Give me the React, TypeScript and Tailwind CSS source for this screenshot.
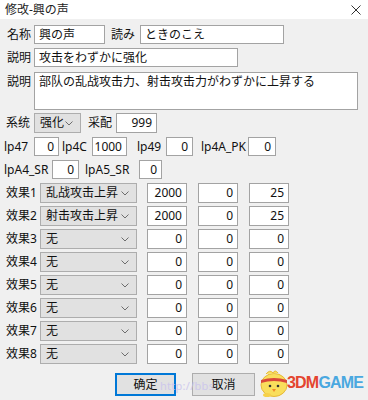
import React from "react";

const Chevron = () => (
  <svg width="8" height="5" viewBox="0 0 8 5" className="shrink-0">
    <path d="M0.5 0.5 L4 4 L7.5 0.5" fill="none" stroke="#6d6d6d" strokeWidth="1" />
  </svg>
);

function Sel({ text, w }: { text: string; w: string }) {
  return (
    <div className={`${w} h-full flex items-center justify-between bg-[#e1e1e1] border border-[#adadad] pl-[5px] pr-[7px]`}>
      <span>{text}</span>
      <Chevron />
    </div>
  );
}

function Box({ v, w, left }: { v: string; w: string; left?: boolean }) {
  return (
    <div className={`${w} h-full flex items-center ${left ? "justify-start pl-[4px]" : "justify-end pr-[4px]"} bg-white border border-[#a3a3a3]`}>
      <span>{v}</span>
    </div>
  );
}

const effects: [string, string, string, string][] = [
  ["乱战攻击上昇", "2000", "0", "25"],
  ["射击攻击上昇", "2000", "0", "25"],
  ["无", "0", "0", "0"],
  ["无", "0", "0", "0"],
  ["无", "0", "0", "0"],
  ["无", "0", "0", "0"],
  ["无", "0", "0", "0"],
  ["无", "0", "0", "0"],
];

export default function App() {
  return (
    <div
      className="relative w-[368px] h-[400px] overflow-hidden bg-[#f0f0f0] text-[12px] text-[#111] leading-none"
      style={{ fontFamily: '"Noto Sans", "Noto Sans CJK JP", sans-serif' }}
    >
      {/* title bar */}
      <div className="h-[19px] bg-white flex items-center justify-between pl-[5px] pr-[7px]">
        <span className="text-[12px] text-[#222]">修改-興の声</span>
        <svg width="10" height="10" viewBox="0 0 10 10">
          <path d="M0.5 0.5 L9.5 9.5 M9.5 0.5 L0.5 9.5" stroke="#333" strokeWidth="1" />
        </svg>
      </div>

      <div className="flex flex-col">
        {/* 名称 row */}
        <div className="mt-[6px] h-[19px] flex items-center pl-[7px]">
          <span className="w-[27px]">名称</span>
          <Box v="興の声" w="w-[71px]" left />
          <span className="ml-[6px] w-[29px]">読み</span>
          <Box v="ときのこえ" w="w-[144px]" left />
        </div>
        {/* 説明 row */}
        <div className="mt-[4px] h-[19px] flex items-center pl-[7px]">
          <span className="w-[27px]">説明</span>
          <Box v="攻击をわずかに强化" w="w-[204px]" left />
        </div>
        {/* textarea */}
        <div className="mt-[5px] h-[38px] flex items-start pl-[7px]">
          <span className="w-[27px] pt-[4px]">説明</span>
          <div className="w-[324px] h-full bg-white border border-[#a3a3a3] pl-[4px] pt-[3px]">
            部队の乱战攻击力、射击攻击力がわずかに上昇する
          </div>
        </div>
        {/* 系统 row */}
        <div className="mt-[3px] h-[20px] flex items-center pl-[6px]">
          <span className="w-[28px]">系统</span>
          <Sel text="强化" w="w-[47px]" />
          <span className="ml-[7px] w-[28px]">采配</span>
          <Box v="999" w="w-[41px]" />
        </div>
        {/* lp row */}
        <div className="mt-[4px] h-[19px] flex items-center pl-[4px]">
          <span className="w-[30px]">lp47</span>
          <Box v="0" w="w-[25px]" />
          <span className="ml-[3px] w-[30px]">lp4C</span>
          <Box v="1000" w="w-[35px]" />
          <span className="ml-[10px] w-[29px]">lp49</span>
          <Box v="0" w="w-[27px]" />
          <span className="ml-[8px] w-[47px]">lp4A_PK</span>
          <Box v="0" w="w-[28px]" />
        </div>
        {/* lpA4 row */}
        <div className="mt-[4px] h-[19px] flex items-center pl-[4px]">
          <span className="w-[48px]">lpA4_SR</span>
          <Box v="0" w="w-[27px]" />
          <span className="ml-[6px] w-[54px]">lpA5_SR</span>
          <Box v="0" w="w-[23px]" />
        </div>
        {/* effects */}
        <div className="mt-[4px] flex flex-col gap-[3px]">
          {effects.map((e, i) => (
            <div key={i} className="h-[20px] flex items-center pl-[6px]">
              <span className="w-[34px]">效果{i + 1}</span>
              <Sel text={e[0]} w="w-[97px]" />
              <div className="ml-[10px] h-full flex">
                <Box v={e[1]} w="w-[40px]" />
              </div>
              <div className="ml-[11px] h-full flex">
                <Box v={e[2]} w="w-[40px]" />
              </div>
              <div className="ml-[11px] h-full flex">
                <Box v={e[3]} w="w-[40px]" />
              </div>
            </div>
          ))}
        </div>
        {/* buttons */}
        <div className="mt-[9px] h-[23px] flex items-center pl-[115px]">
          <div className="w-[61px] h-full flex items-center justify-center bg-[#e1e1e1] border-2 border-[#0078d7]">
            确定
          </div>
          <div className="ml-[16px] w-[63px] h-full flex items-center justify-center bg-[#e1e1e1] border border-[#adadad]">
            取消
          </div>
        </div>
      </div>

      {/* watermark */}
      <div className="absolute left-[160px] top-[380px] text-[11px] text-[#c9c3ee] opacity-80 tracking-wide">
        http://bbs
      </div>
      <div className="absolute left-[258px] top-[368px] flex items-center">
        <svg width="32" height="30" viewBox="0 0 32 30">
          <ellipse cx="16" cy="17" rx="13" ry="11.5" fill="#f9de5c" stroke="#e6b93a" strokeWidth="1" />
          <path d="M8 6 Q12 1 15 5 Q17 1 20 5" fill="#f9de5c" stroke="#e6b93a" strokeWidth="1" />
          <path d="M3 12 Q16 8 29 12 L29 15 Q16 11 3 15 Z" fill="#d9473a" />
          <circle cx="12" cy="18" r="1.3" fill="#333" />
          <circle cx="20" cy="18" r="1.3" fill="#333" />
          <path d="M14 21 L18 21 L16 24 Z" fill="#f08a2a" />
          <ellipse cx="9" cy="27" rx="4" ry="2" fill="#f6d14a" />
        </svg>
        <span className="ml-[-3px] text-[16px] font-bold tracking-[-0.8px]" style={{ fontFamily: '"Liberation Sans", Arial, sans-serif' }}>
          <span className="text-[#e4452f]">3DM</span>
          <span className="text-[#4aa8e0]">GAME</span>
        </span>
      </div>
    </div>
  );
}
